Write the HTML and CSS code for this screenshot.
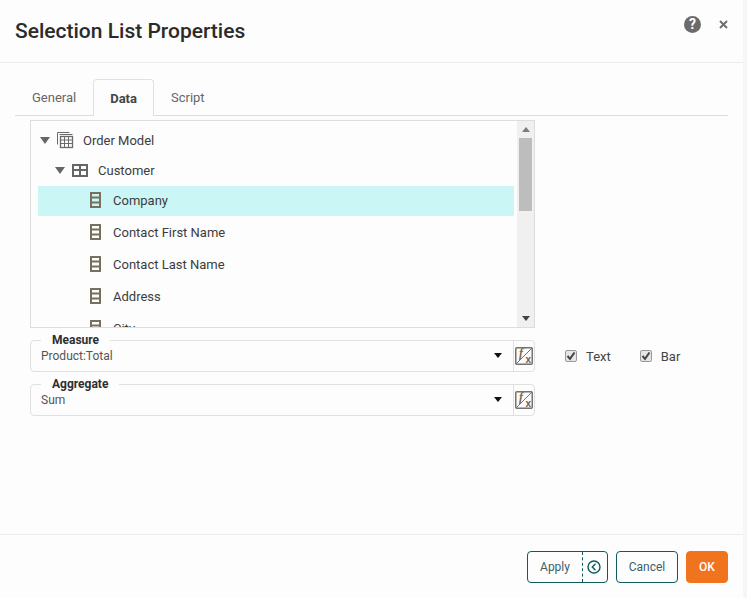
FILE: index.html
```html
<!DOCTYPE html>
<html>
<head>
  <meta charset="utf-8">
  <title>Selection List Properties</title>
  <link rel="stylesheet" href="styles.css">
</head>
<body>
  <div class="dialog">
    <!-- header -->
    <div class="header">
      <div class="title">Selection List Properties</div>
      <div class="help">?</div>
      <svg class="close" width="9" height="9" viewBox="0 0 9 9"><path d="M1 1 L8 8 M8 1 L1 8" stroke="#6f6f6f" stroke-width="2"/></svg>
    </div>

    <div class="content">
      <!-- tabs -->
      <div class="tabs">
        <div class="tab">General</div>
        <div class="tab active">Data</div>
        <div class="tab">Script</div>
      </div>

      <!-- tree -->
      <div class="tree">
        <div class="tree-list">
          <div class="row row-model">
            <span class="arrow"></span>
            <svg class="icon" width="18" height="18" viewBox="0 0 18 18" fill="none" stroke="#6b6b6b">
              <path d="M1.5 13.5 V1.5 H13.5 M3.5 3.5 H16.5"/>
              <rect x="4.5" y="5.5" width="12" height="11" stroke-width="1.3"/>
              <path d="M4.5 9 H16.5 M4.5 12.5 H16.5 M8.5 5.5 V16.5 M12.5 5.5 V16.5"/>
            </svg>
            <span>Order Model</span>
          </div>
          <div class="row row-table">
            <span class="arrow"></span>
            <svg class="icon" width="16" height="13" viewBox="0 0 16 13" fill="none" stroke="#666" stroke-width="2">
              <rect x="1" y="1" width="14" height="11"/>
              <path d="M1 6 H15 M8 1 V12"/>
            </svg>
            <span>Customer</span>
          </div>
          <div class="row row-col selected"><svg class="col-icon" width="11" height="16" viewBox="0 0 11 16" fill="none" stroke="#77705f" stroke-width="2"><rect x="1" y="1" width="9" height="14"/><path d="M1 5.5 H10 M1 10.5 H10"/></svg><span>Company</span></div>
          <div class="row row-col"><svg class="col-icon" width="11" height="16" viewBox="0 0 11 16" fill="none" stroke="#77705f" stroke-width="2"><rect x="1" y="1" width="9" height="14"/><path d="M1 5.5 H10 M1 10.5 H10"/></svg><span>Contact First Name</span></div>
          <div class="row row-col"><svg class="col-icon" width="11" height="16" viewBox="0 0 11 16" fill="none" stroke="#77705f" stroke-width="2"><rect x="1" y="1" width="9" height="14"/><path d="M1 5.5 H10 M1 10.5 H10"/></svg><span>Contact Last Name</span></div>
          <div class="row row-col"><svg class="col-icon" width="11" height="16" viewBox="0 0 11 16" fill="none" stroke="#77705f" stroke-width="2"><rect x="1" y="1" width="9" height="14"/><path d="M1 5.5 H10 M1 10.5 H10"/></svg><span>Address</span></div>
          <div class="row row-col"><svg class="col-icon" width="11" height="16" viewBox="0 0 11 16" fill="none" stroke="#77705f" stroke-width="2"><rect x="1" y="1" width="9" height="14"/><path d="M1 5.5 H10 M1 10.5 H10"/></svg><span>City</span></div>
        </div>
        <div class="scrollbar">
          <span class="scroll-up"></span>
          <div class="scroll-thumb"></div>
          <span class="scroll-down"></span>
        </div>
      </div>

      <!-- fields -->
      <div class="field-row">
        <fieldset class="field">
          <legend>Measure</legend>
          <div class="field-value">Product:Total</div>
          <span class="combo-arrow"></span>
          <div class="fx-cell">
            <svg class="fx" width="18" height="18" viewBox="0 0 18 18">
              <rect x="0.75" y="0.75" width="16.5" height="16.5" rx="1" fill="#fbfbfb" stroke="#737373" stroke-width="1.5"/>
              <path d="M1 17 L17 1" stroke="#737373"/>
              <text x="4" y="10" class="fx-f">f</text>
              <text x="10.5" y="15.5" class="fx-x">x</text>
            </svg>
          </div>
        </fieldset>
        <label class="check">
          <span class="box"><svg width="10" height="10" viewBox="0 0 10 10" fill="none" stroke="#444" stroke-width="2"><path d="M1.5 5 L4 7.8 L8.5 1.5"/></svg></span>Text
        </label>
        <label class="check">
          <span class="box"><svg width="10" height="10" viewBox="0 0 10 10" fill="none" stroke="#444" stroke-width="2"><path d="M1.5 5 L4 7.8 L8.5 1.5"/></svg></span>Bar
        </label>
      </div>
      <div class="field-row">
        <fieldset class="field">
          <legend>Aggregate</legend>
          <div class="field-value">Sum</div>
          <span class="combo-arrow"></span>
          <div class="fx-cell">
            <svg class="fx" width="18" height="18" viewBox="0 0 18 18">
              <rect x="0.75" y="0.75" width="16.5" height="16.5" rx="1" fill="#fbfbfb" stroke="#737373" stroke-width="1.5"/>
              <path d="M1 17 L17 1" stroke="#737373"/>
              <text x="4" y="10" class="fx-f">f</text>
              <text x="10.5" y="15.5" class="fx-x">x</text>
            </svg>
          </div>
        </fieldset>
      </div>
    </div>

    <!-- footer -->
    <div class="footer">
      <div class="btn btn-apply">
        <span class="apply-label">Apply</span>
        <span class="apply-icon">
          <svg width="14" height="14" viewBox="0 0 14 14" fill="none" stroke="#0f5a5c" stroke-width="1.4"><circle cx="7" cy="7" r="6"/><path d="M8.5 3.8 L5.3 7 L8.5 10.2"/></svg>
        </span>
      </div>
      <div class="btn btn-cancel">Cancel</div>
      <div class="btn btn-ok">OK</div>
    </div>
  </div>
</body>
</html>
```

FILE: styles.css
```css
html, body {
  margin: 0;
  height: 100%;
}

body {
  font-family: Roboto, "Liberation Sans", sans-serif;
  font-size: 13px;
  color: #333;
  background-color: #f6f6f6;
  overflow: hidden;
}

.dialog {
  width: 743px;
  height: 598px;
  background-color: #fdfdfd;
  display: flex;
  flex-direction: column;
}

/* header */
.header {
  height: 62px;
  border-bottom: 1px solid #eeeeee;
  display: flex;
  align-items: center;
  padding: 0 15px;
}

.title {
  flex: 1;
  font-size: 21px;
  font-weight: 500;
  color: #2b2b2b;
}

.help {
  width: 17px;
  height: 17px;
  border-radius: 50%;
  background-color: #6b6b6b;
  color: #fff;
  font-size: 14px;
  font-weight: 700;
  line-height: 17px;
  text-align: center;
  margin: -13px 0 0 0;
}

.close {
  margin: -13px 0 0 18px;
}

/* tabs */
.content {
  flex: 1;
  padding: 16px 15px 0 15px;
}

.tabs {
  display: flex;
  height: 36px;
  border-bottom: 1px solid #dddddd;
  width: 713px;
}

.tab {
  padding: 0 17px;
  line-height: 38px;
  color: #666;
}

.tab.active {
  height: 36px;
  background-color: #fdfdfd;
  border: 1px solid #e0e0e0;
  border-bottom: none;
  border-radius: 4px 4px 0 0;
  font-weight: 700;
  color: #444;
  line-height: 37px;
  padding: 0 16px;
}

/* tree */
.tree {
  width: 503px;
  height: 206px;
  margin: 4px 0 6px 15px;
  border: 1px solid #dddddd;
  display: flex;
  overflow: hidden;
}

.tree-list {
  flex: 1;
  padding: 4px 0 0 7px;
  min-width: 0;
}

.row {
  display: flex;
  align-items: center;
  color: #3c3c3c;
}

.row-model, .row-table {
  height: 30px;
}

.row-model {
  padding-left: 2px;
}

.row-table {
  padding-left: 17px;
}

.row-col {
  height: 32px;
  padding-left: 52px;
  width: 424px;
}

.row-col.selected {
  height: 28px;
  margin-top: 1px;
  padding-bottom: 2px;
  background-color: #caf6f5;
}

.arrow {
  width: 0;
  height: 0;
  border-left: 5px solid transparent;
  border-right: 5px solid transparent;
  border-top: 7px solid #666;
  margin-right: 7px;
}

.row-model .arrow {
  margin-right: 6px;
}

.row-model .icon {
  margin-right: 9px;
}

.row-table .icon {
  margin-right: 10px;
}

.col-icon {
  margin-right: 12px;
}

.scrollbar {
  width: 17px;
  background-color: #f0f0f0;
  display: flex;
  flex-direction: column;
  align-items: center;
  padding: 6px 0;
  box-sizing: border-box;
}

.scroll-up {
  border-left: 4px solid transparent;
  border-right: 4px solid transparent;
  border-bottom: 5px solid #7d7d7d;
}

.scroll-thumb {
  width: 13px;
  height: 73px;
  margin-top: 6px;
  background-color: #bdbdbd;
}

.scroll-down {
  border-left: 4px solid transparent;
  border-right: 4px solid transparent;
  border-top: 5px solid #444;
  margin-top: auto;
}

/* fields */
.field-row {
  display: flex;
  align-items: flex-start;
  margin: 0 0 6px 15px;
}

.field {
  width: 505px;
  height: 38px;
  box-sizing: border-box;
  margin: 0;
  padding: 0 0 0 10px;
  border: 1px solid #e0e0e0;
  border-radius: 4px;
  display: flex;
  align-items: center;
}

.field legend {
  font-size: 12px;
  font-weight: 700;
  color: #2f2f2f;
  padding: 0 11px;
  line-height: 12px;
}

.field-value {
  flex: 1;
  font-size: 12px;
  color: #555;
  margin-top: -5px;
}

.combo-arrow {
  width: 0;
  height: 0;
  border-left: 4px solid transparent;
  border-right: 4px solid transparent;
  border-top: 5px solid #111;
  margin: -6px 11px 0 0;
}

.fx-cell {
  width: 20px;
  height: 30px;
  margin-top: -5px;
  border-left: 1px solid #e0e0e0;
  display: flex;
  align-items: center;
  justify-content: center;
}

.fx-f {
  font-family: "Liberation Serif", serif;
  font-style: italic;
  font-weight: 700;
  font-size: 12px;
  fill: #7d6c45;
}

.fx-x {
  font-family: "Liberation Sans", sans-serif;
  font-weight: 700;
  font-size: 10px;
  fill: #6b6050;
}

.check {
  display: flex;
  align-items: center;
  height: 32px;
  margin-top: 6px;
  color: #444;
  margin-left: 30px;
}

.check + .check {
  margin-left: 29px;
}

.box {
  width: 12px;
  height: 12px;
  box-sizing: border-box;
  border: 1px solid #9a9a9a;
  border-radius: 2px;
  background-color: #e6e6e6;
  display: flex;
  align-items: center;
  justify-content: center;
  margin-right: 9px;
}

/* footer */
.footer {
  height: 64px;
  box-sizing: border-box;
  border-top: 1px solid #eeeeee;
  display: flex;
  justify-content: flex-end;
  align-items: flex-start;
  gap: 8px;
  padding: 16px 15px 0 0;
}

.btn {
  box-sizing: border-box;
  height: 32px;
  border: 1px solid #0f5a5c;
  border-radius: 4px;
  font-size: 12px;
  line-height: 30px;
  text-align: center;
  color: #3f5f68;
}

.btn-apply {
  width: 81px;
  display: flex;
}

.apply-label {
  width: 54px;
}

.apply-icon {
  flex: 1;
  border-left: 1px dashed #0f5a5c;
  display: flex;
  align-items: center;
  padding-left: 4px;
}

.btn-cancel {
  width: 62px;
}

.btn-ok {
  width: 42px;
  background-color: #f0741e;
  border-color: #f0741e;
  color: #fff;
  font-weight: 500;
}
```
